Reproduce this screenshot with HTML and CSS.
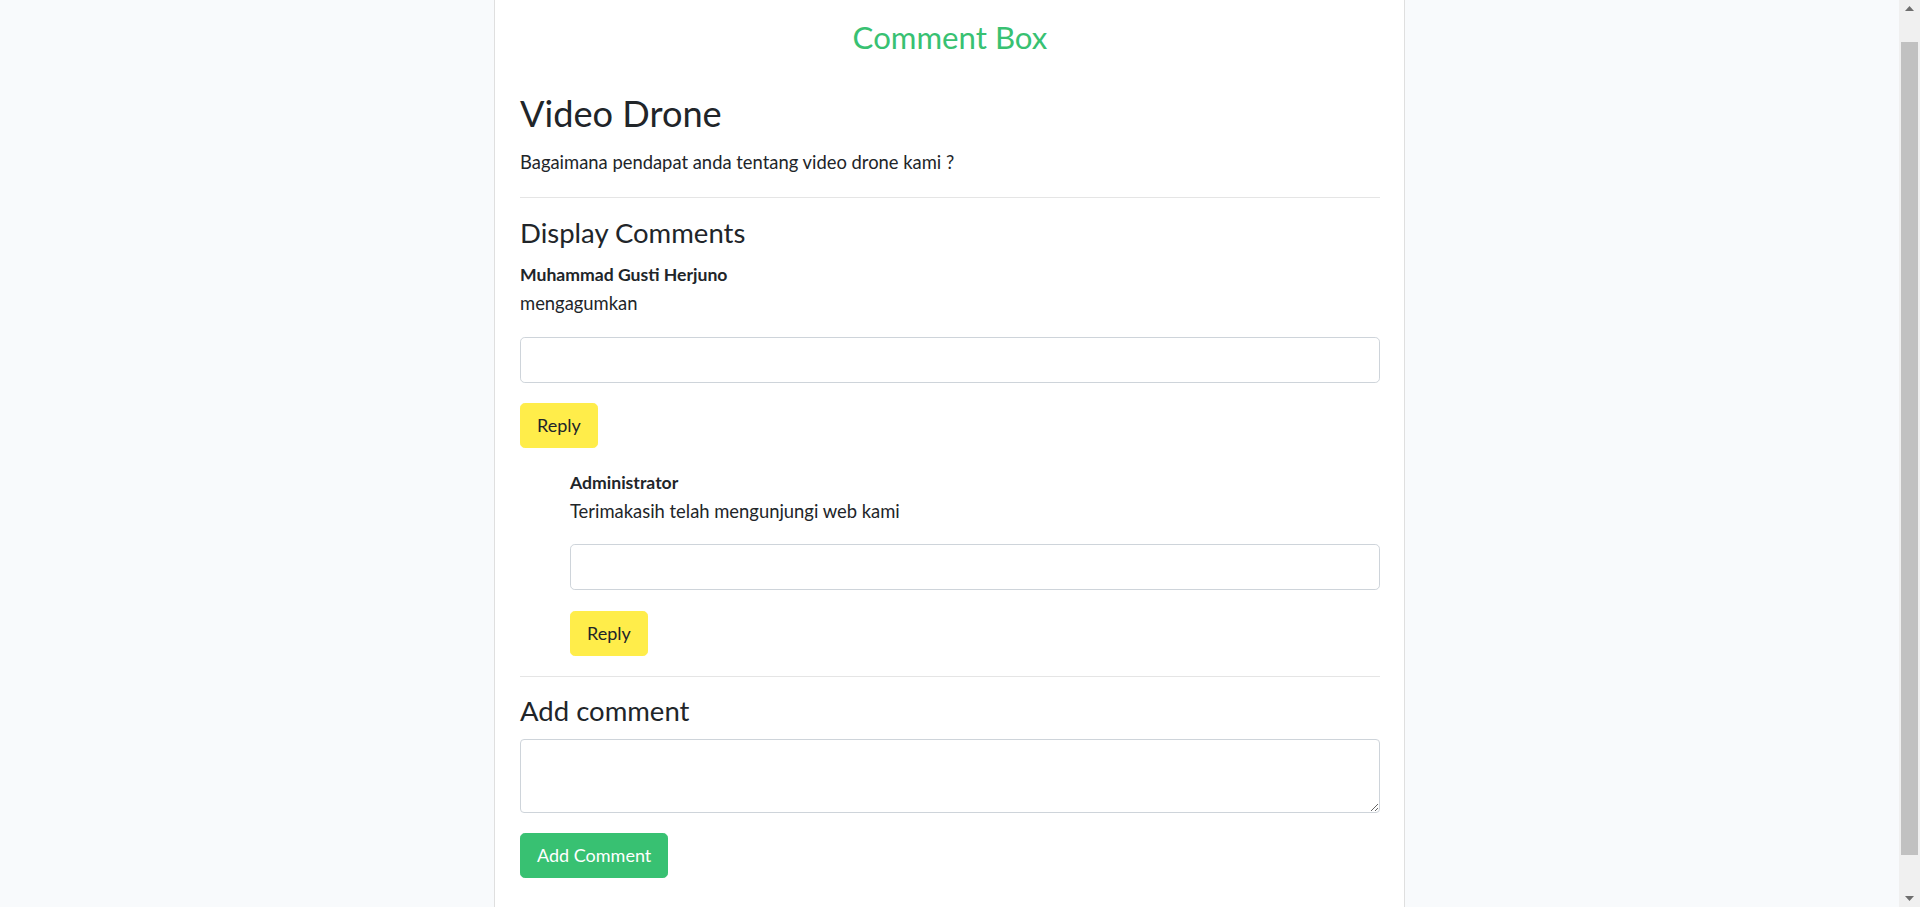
FILE: index.html
```html
<!DOCTYPE html>
<html lang="id">
<head>
<meta charset="utf-8">
<title>Comment Box</title>
<link rel="stylesheet" href="styles.css">
</head>
<body>
<div class="viewport">
  <main class="page">
    <h2 class="brand">Comment Box</h2>
    <h1 class="post-title">Video Drone</h1>
    <p class="post-body">Bagaimana pendapat anda tentang video drone kami ?</p>
    <hr class="rule rule-first">
    <h3 class="section-title">Display Comments</h3>

    <div class="comment">
      <strong class="author">Muhammad Gusti Herjuno</strong>
      <p class="comment-text">mengagumkan</p>
      <form class="reply-form">
        <input class="field field-lg" type="text">
        <button class="btn btn-warning" type="button">Reply</button>
      </form>

      <div class="comment comment-child">
        <strong class="author">Administrator</strong>
        <p class="comment-text">Terimakasih telah mengunjungi web kami</p>
        <form class="reply-form">
          <input class="field field-lg" type="text">
          <button class="btn btn-warning" type="button">Reply</button>
        </form>
      </div>
    </div>

    <hr class="rule rule-second">
    <h3 class="section-title section-add">Add comment</h3>
    <form class="add-form">
      <textarea class="field field-area"></textarea>
      <button class="btn btn-success" type="button">Add Comment</button>
    </form>
  </main>
</div>
<aside class="scrollbar" aria-hidden="true">
  <span class="sb-arrow">
    <svg width="9" height="5" viewBox="0 0 9 5"><polygon points="0,5 4.5,0 9,5" fill="#6e6e6e"/></svg>
  </span>
  <span class="sb-track"><span class="sb-thumb"></span></span>
  <span class="sb-arrow">
    <svg width="9" height="5" viewBox="0 0 9 5"><polygon points="0,0 9,0 4.5,5" fill="#6e6e6e"/></svg>
  </span>
</aside>
</body>
</html>
```

FILE: styles.css
```css
* { box-sizing: border-box; }

html, body {
  margin: 0;
  padding: 0;
  height: 100%;
}

body {
  display: flex;
  overflow: hidden;
  background: #f8fafc;
  color: #212529;
  font-family: "Lato", "Noto Sans", sans-serif;
  font-size: 18.4px;
  line-height: 28px;
}

.viewport {
  flex: 1 1 auto;
  min-width: 0;
  height: 100%;
  overflow: hidden;
}

.page {
  width: 911px;
  margin: 0 auto;
  min-height: 960px;
  background: #fff;
  border-left: 1px solid rgba(0, 0, 0, 0.125);
  border-right: 1px solid rgba(0, 0, 0, 0.125);
  padding: 0 24px 40px 25px;
  display: flex;
  flex-direction: column;
}

.brand {
  margin: 19px 0 0;
  font-size: 31.2px;
  font-weight: 400;
  line-height: 37.4px;
  color: #38c172;
  text-align: center;
}

.post-title {
  margin: 36px 0 0;
  font-size: 36.2px;
  font-weight: 400;
  line-height: 42.7px;
}

.post-body {
  margin: 13px 0 0;
}

.rule {
  width: 100%;
  margin: 0;
  border: 0;
  border-top: 1px solid rgba(0, 0, 0, 0.1);
}

.rule-first { margin-top: 21px; }
.rule-second { margin-top: 20px; }

.section-title {
  margin: 18px 0 0;
  font-size: 27.5px;
  font-weight: 400;
  line-height: 33px;
}

.section-add { margin-top: 17px; }

.comment {
  display: flex;
  flex-direction: column;
}

.author {
  margin-top: 13px;
  font-size: 17.6px;
  font-weight: 700;
  line-height: 26px;
}

.comment-text {
  margin: 1px 0 0;
}

.comment-child {
  margin-left: 50px;
}

.comment-child .author { margin-top: 22px; }
.comment-child .comment-text { margin-top: 1px; }

.reply-form,
.add-form {
  display: flex;
  flex-direction: column;
  align-items: flex-start;
}

.field {
  display: block;
  width: 100%;
  margin: 0;
  background: #fff;
  border: 1px solid #ced4da;
  color: #495057;
  font-family: inherit;
  font-size: 18px;
}

.field-lg {
  height: 46px;
  margin-top: 20px;
  padding: 8px 16px;
  border-radius: 4.8px;
}

.comment-child .field-lg { margin-top: 19px; }

.field-area {
  height: 74px;
  margin-top: 12px;
  padding: 6px 12px;
  border-radius: 4px;
  resize: vertical;
}

.btn {
  margin-top: 20px;
  height: 45px;
  padding: 0 16px;
  border: 1px solid transparent;
  border-radius: 4.8px;
  font-family: inherit;
  font-size: 18px;
  line-height: 27px;
  cursor: pointer;
}

.comment-child .btn { margin-top: 21px; }

.btn-warning {
  background: #ffed4a;
  border-color: #ffed4a;
  color: #212529;
}

.btn-success {
  background: #38c172;
  border-color: #38c172;
  color: #fff;
}

.scrollbar {
  flex: 0 0 21px;
  height: 100%;
  display: flex;
  flex-direction: column;
  background: #f0f0f0;
}

.sb-arrow {
  flex: 0 0 17px;
  display: flex;
  align-items: center;
  justify-content: center;
}

.sb-track {
  flex: 1 1 auto;
  display: flex;
  flex-direction: column;
  align-items: center;
}

.sb-thumb {
  width: 17px;
  height: 813px;
  margin-top: 25px;
  background: #c1c1c1;
}
```
